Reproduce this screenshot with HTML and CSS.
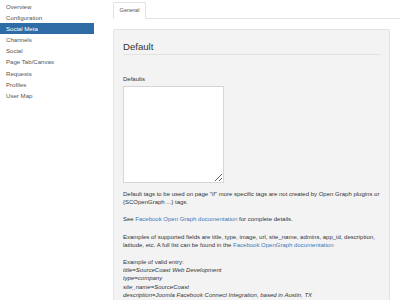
FILE: index.html
```html
<html>
<head>
<link rel="stylesheet" href="styles.css">
</head>
<body>
<div class="page">
	<ul class="side_nav">
		<li><a href="#">Overview</a></li>
		<li><a href="#">Configuration</a></li>
		<li class="active"><a href="#">Social Meta</a></li>
		<li><a href="#">Channels</a></li>
		<li><a href="#">Social</a></li>
		<li><a href="#">Page Tab/Canvas</a></li>
		<li><a href="#">Requests</a></li>
		<li><a href="#">Profiles</a></li>
		<li><a href="#">User Map</a></li>
	</ul>
	<div class="main">
		<ul class="tabs">
			<li class="active"><a href="#">General</a></li>
		</ul>
		<div class="well">
			<h3 class="well_title">Default</h3>
			<div class="field">
				<label class="field_label">Defaults</label>
				<textarea class="field_input"></textarea>
			</div>
			<p>Default tags to be used on page "if" more specific tags are not created by Open Graph plugins or {SCOpenGraph ...} tags.</p>
			<p>See <a href="#">Facebook Open Graph documentation</a> for complete details.</p>
			<p>Examples of supported fields are title, type, image, url, site_name, admins, app_id, description, latitude, etc. A full list can be found in the <a href="#">Facebook OpenGraph documentation</a></p>
			<p>Example of valid entry:<br/>
				<em>title=SourceCoast Web Development</em><br/>
				<em>type=company</em><br/>
				<em>site_name=SourceCoast</em><br/>
				<em>description=Joomla Facebook Connect Integration, based in Austin, TX</em>
			</p>
		</div>
	</div>
</div>
</body>
</html>
```
FILE: styles.css
```css
html, body{
	margin:0;
	padding:0;
	font-family: "Liberation Sans", Arial, sans-serif;
	font-size:6px;
	color:#333;
	background:#fff;
	overflow:hidden;
}
.page{
	display:flex;
	align-items:flex-start;
}
.side_nav{
	list-style-type:none;
	margin:0;
	padding:0;
	padding-top:1px;
	width:94px;
	flex:none;
	font-size:6.1px;
}
.side_nav li a{
	display:block;
	height:11.1px;
	line-height:11.1px;
	padding-left:6px;
	color:#555;
	text-decoration:none;
}
.side_nav li.active a{
	background:#2f6ca6;
	color:#fff;
}
.main{
	flex:1;
	margin-left:19px;
	padding-top:2px;
}
.tabs{
	list-style-type:none;
	margin:0;
	padding:0;
	display:flex;
	border-bottom:1px solid #e2e2e2;
}
.tabs li a{
	display:block;
	width:31px;
	height:15px;
	line-height:15px;
	text-align:center;
	color:#555;
	text-decoration:none;
	background:#fff;
	border:1px solid #e2e2e2;
	border-bottom-color:#fff;
	border-radius:2px 2px 0 0;
	margin-bottom:-1px;
	font-size:5.6px;
}
.well{
	margin-top:10px;
	width:277px;
	box-sizing:border-box;
	background:#f3f3f3;
	border:1px solid #e3e3e3;
	border-radius:2px;
	padding:0 8px 0 9px;
	line-height:8.2px;
}
.well_title{
	margin:0;
	padding-top:11px;
	padding-bottom:1px;
	font-size:9.6px;
	line-height:12px;
	font-weight:normal;
	color:#333;
	border-bottom:1px solid #e3e3e3;
}
.field{
	margin-top:19px;
	margin-bottom:7px;
}
.field_label{
	display:block;
	line-height:10px;
	margin-bottom:2px;
}
.field_input{
	display:block;
	width:101px;
	height:97px;
	box-sizing:border-box;
	border:1px solid #d6d6d6;
	background:#fff;
	margin:0;
	padding:0;
}
.well p{
	margin:0 0 9px 0;
}
.well a{
	color:#3a79b8;
	text-decoration:none;
}
```
